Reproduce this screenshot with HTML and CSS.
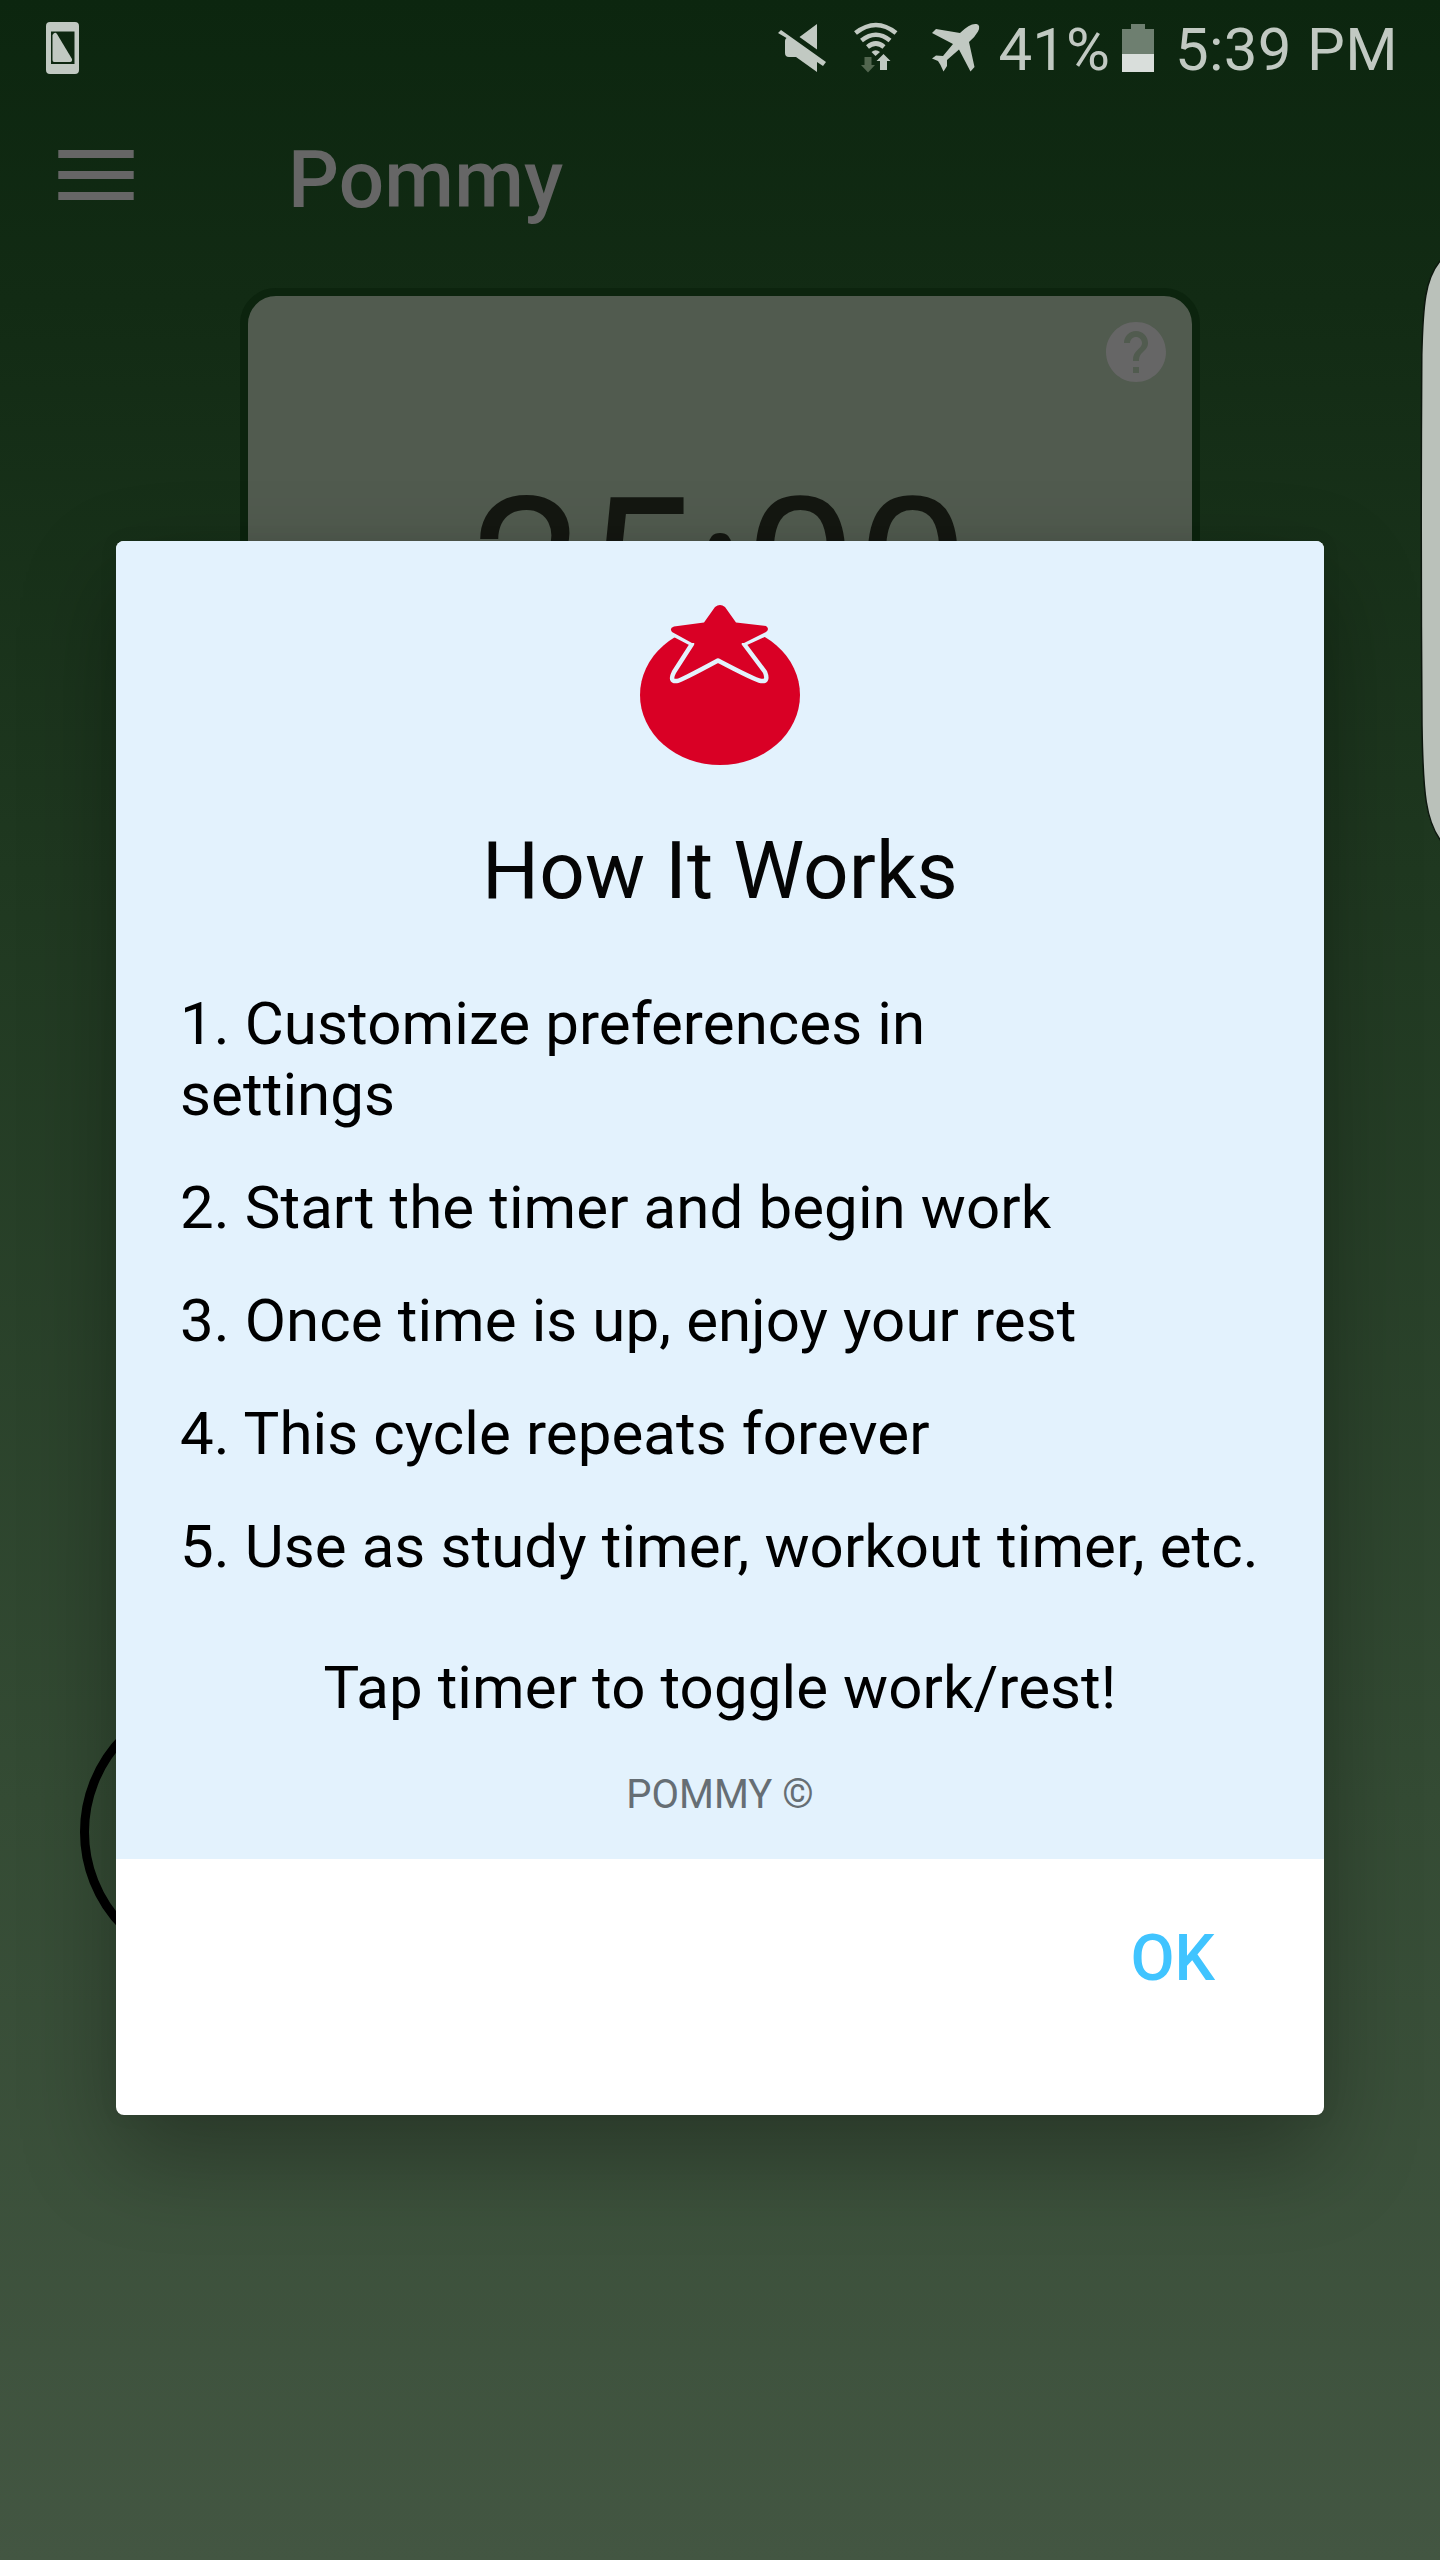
FILE: index.html
```html
<!DOCTYPE html>
<html lang="en">
<head>
<meta charset="utf-8">
<title>Pommy</title>
<link rel="stylesheet" href="styles.css">
</head>
<body>
<div class="screen">
  <header class="status">
    <svg class="status-card" width="34" height="52" viewBox="0 0 34 52"><path fill="#c1c9c2" fill-rule="evenodd" d="M4 0H29Q33 0 33 4V48Q33 52 29 52H4Q0 52 0 48V4Q0 0 4 0ZM5 9.500V42H28.500V9.500Z"/><path fill="#c1c9c2" d="M6.500 13Q9 9 11 12L26 37Q26.500 40 24 40H8Q6.500 40 6.500 38Z"/></svg>
    <svg class="status-mute" width="50" height="52" viewBox="0 0 50 52"><path fill="#c1c9c2" d="M39 2V27.500L21.500 15ZM3 8L48 40L45 44L39 40V50L18 35H11Q7 35 7 31V19Q7 17 8.500 16L0 11Z"/></svg>
    <svg class="status-wifi" width="44" height="52" viewBox="0 0 44 52"><g fill="none" stroke="#c1c9c2" stroke-width="4.600"><path d="M1.500 11Q22 -5 42 11"/><path d="M7.500 18.500Q22 7 36 18.500"/><path d="M13.500 25Q22 18 30 25"/></g><path fill="#c1c9c2" d="M17.500 30Q21.500 26.500 26 30L21.500 34Z"/><path fill="#c1c9c2" d="M29.500 32L36.500 39H33V48H26V39H22.500Z"/><path fill="#52664f" d="M10.500 35H17.500V43H21L14 50.500L7 43H10.500Z"/></svg>
    <svg class="status-plane" width="50" height="52" viewBox="0 0 50 52"><path fill="#c1c9c2" d="M45.500 2Q50 3 47 9.500Q44 15 38 20L43.500 45L39.500 49.500L28 27.500L16 38V44L12.500 49.500L9.500 43L7 39L1 36.500L5 33.500L12 34L22 22L1 11L5 7L29 11Q39 1 45.500 2Z"/></svg>
    <span class="status-percent">41%</span>
    <svg class="status-battery" width="32" height="48" viewBox="0 0 32 48"><path fill="#6e7f70" d="M9 0H23V5H32V30H0V5H9Z"/><path fill="#d9dedb" d="M0 30H32V48H0Z"/></svg>
    <span class="status-clock">5:39 PM</span>
  </header>
  <div class="toolbar">
    <svg width="76" height="50" viewBox="0 0 76 50"><path fill="#666" d="M.3 0H75.700V8H.3ZM.3 21H75.700V29H.3ZM.3 42H75.700V50H.3Z"/></svg>
    <h1 class="app-title">Pommy</h1>
  </div>
  <main class="timer-card">
    <svg class="help" width="72" height="72" viewBox="0 0 24 24"><path fill="#666" d="M12 2C6.480 2 2 6.480 2 12s4.480 10 10 10 10-4.480 10-10S17.520 2 12 2zm1 17h-2v-2h2v2zm2.070-7.750l-.9.920C13.450 12.900 13 13.500 13 15h-2v-.5c0-1.100.45-2.100 1.170-2.830l1.240-1.260c.37-.36.59-.86.59-1.410 0-1.100-.9-2-2-2s-2 .9-2 2H8c0-2.210 1.790-4 4-4s4 1.790 4 4c0 .88-.36 1.680-.93 2.250z"/></svg>
    <div class="time">25:00</div>
  </main>
  <div class="round-button"></div>
  <svg class="edge-handle" width="20" height="590" viewBox="0 0 20 590"><path fill="#bac1ba" stroke="#0d170e" stroke-width="1.500" d="M21 5C5 23 3 50 1.800 100Q.6 290 2 470C3 540 6 566 21 586Z"/></svg>
  <section class="dialog">
    <div class="dialog-body">
      <svg class="logo" width="160" height="160" viewBox="0 0 160 160"><ellipse cx="80" cy="90" rx="80" ry="70" fill="#d90025"/><path fill="none" stroke="#e3f2fd" stroke-width="4.500" stroke-linejoin="round" d="M31 28L52 39L34 67Q29 77 37 76Q40 76 78 55.500Q115 75 121 76Q129 77 125 67L104 39L128 28"/><path fill="#d90025" d="M75 2Q80 -2 85 2L96 17.500L126 21Q130 24 126 27L104 38H52L32 27Q29 23 34 21.500L64 17.500Z"/></svg>
      <h2 class="title">How It Works</h2>
      <ol class="steps">
        <li>1. Customize preferences in<br>settings</li>
        <li>2. Start the timer and begin work</li>
        <li>3. Once time is up, enjoy your rest</li>
        <li>4. This cycle repeats forever</li>
        <li>5. Use as study timer, workout timer, etc.</li>
      </ol>
      <p class="tip">Tap timer to toggle work/rest!</p>
      <p class="copyright">POMMY ©</p>
    </div>
    <div class="actions"><button class="ok">OK</button></div>
  </section>
</div>
</body>
</html>
```
FILE: styles.css
```css
* { box-sizing: border-box; margin: 0; padding: 0; }
body { font-family: Roboto, "Liberation Sans", sans-serif; }
.screen {
  position: relative;
  width: 1440px;
  height: 2560px;
  overflow: hidden;
  background: linear-gradient(#0c260f 0, #122b14 300px, #1f3820 870px, #344b34 1800px, #435642 2560px);
}
.status {
  display: flex;
  align-items: flex-start;
  height: 96px;
  padding: 22px 0 0 46px;
  color: #c1c9c2;
  font-size: 60px;
  line-height: 70px;
  white-space: nowrap;
}
.status-mute { margin-left: 697.5px; }
.status-wifi { margin-left: 26px; }
.status-plane { margin-left: 33px; }
.status-percent { width: 112px; margin: -7px 0 0 18px; }
.status-battery { margin: 2px 0 0 11.5px; }
.status-clock { margin: -7px 0 0 21px; letter-spacing: .3px; }
.toolbar {
  display: flex;
  height: 192px;
  padding: 54px 0 0 58px;
  color: #666;
}
.app-title { margin: -17px 0 0 154px; font-size: 80px; line-height: 94px; font-weight: 500; letter-spacing: .2px; }
.timer-card {
  display: flex;
  flex-direction: column;
  width: 960px;
  height: 720px;
  margin: 0 auto;
  padding: 20px;
  border: 8px solid #0c240e;
  border-radius: 36px;
  background: #515b4f;
}
.help { align-self: flex-end; }
.time { margin-top: 69px; color: #141711; font-size: 200px; line-height: 230px; text-align: center; }
.round-button {
  position: absolute;
  left: 80px;
  top: 1693px;
  width: 278px;
  height: 278px;
  border: 9px solid #000;
  border-radius: 50%;
}
.edge-handle { position: absolute; left: 1420px; top: 255px; }
.dialog {
  position: absolute;
  left: 116px;
  top: 541px;
  width: 1208px;
  height: 1574px;
  border-radius: 8px;
  overflow: hidden;
  background: #fff;
  box-shadow: 0 40px 96px rgba(0, 0, 0, .3), 0 0 20px rgba(0, 0, 0, .06);
}
.dialog-body {
  display: flex;
  flex-direction: column;
  align-items: center;
  height: 1318px;
  padding: 64px 64px 0;
  background: #e3f2fd;
}
.title { margin-top: 59px; color: #050505; font-size: 80px; line-height: 94px; font-weight: 400; letter-spacing: .1px; }
.steps { align-self: stretch; margin-top: 70px; list-style: none; color: #000; font-size: 60px; line-height: 71px; letter-spacing: .09px; white-space: nowrap; }
.steps li { margin-bottom: 42px; }
.tip { margin-top: 28px; color: #000; font-size: 60px; line-height: 71px; letter-spacing: .09px; }
.copyright { margin-top: 48px; color: #666e74; font-size: 40px; line-height: 47px; }
.actions { display: flex; justify-content: flex-end; padding: 62px 109px 0 0; }
.ok { border: 0; background: none; color: #40c4ff; font: 500 64px/76px Roboto, sans-serif; }
```
